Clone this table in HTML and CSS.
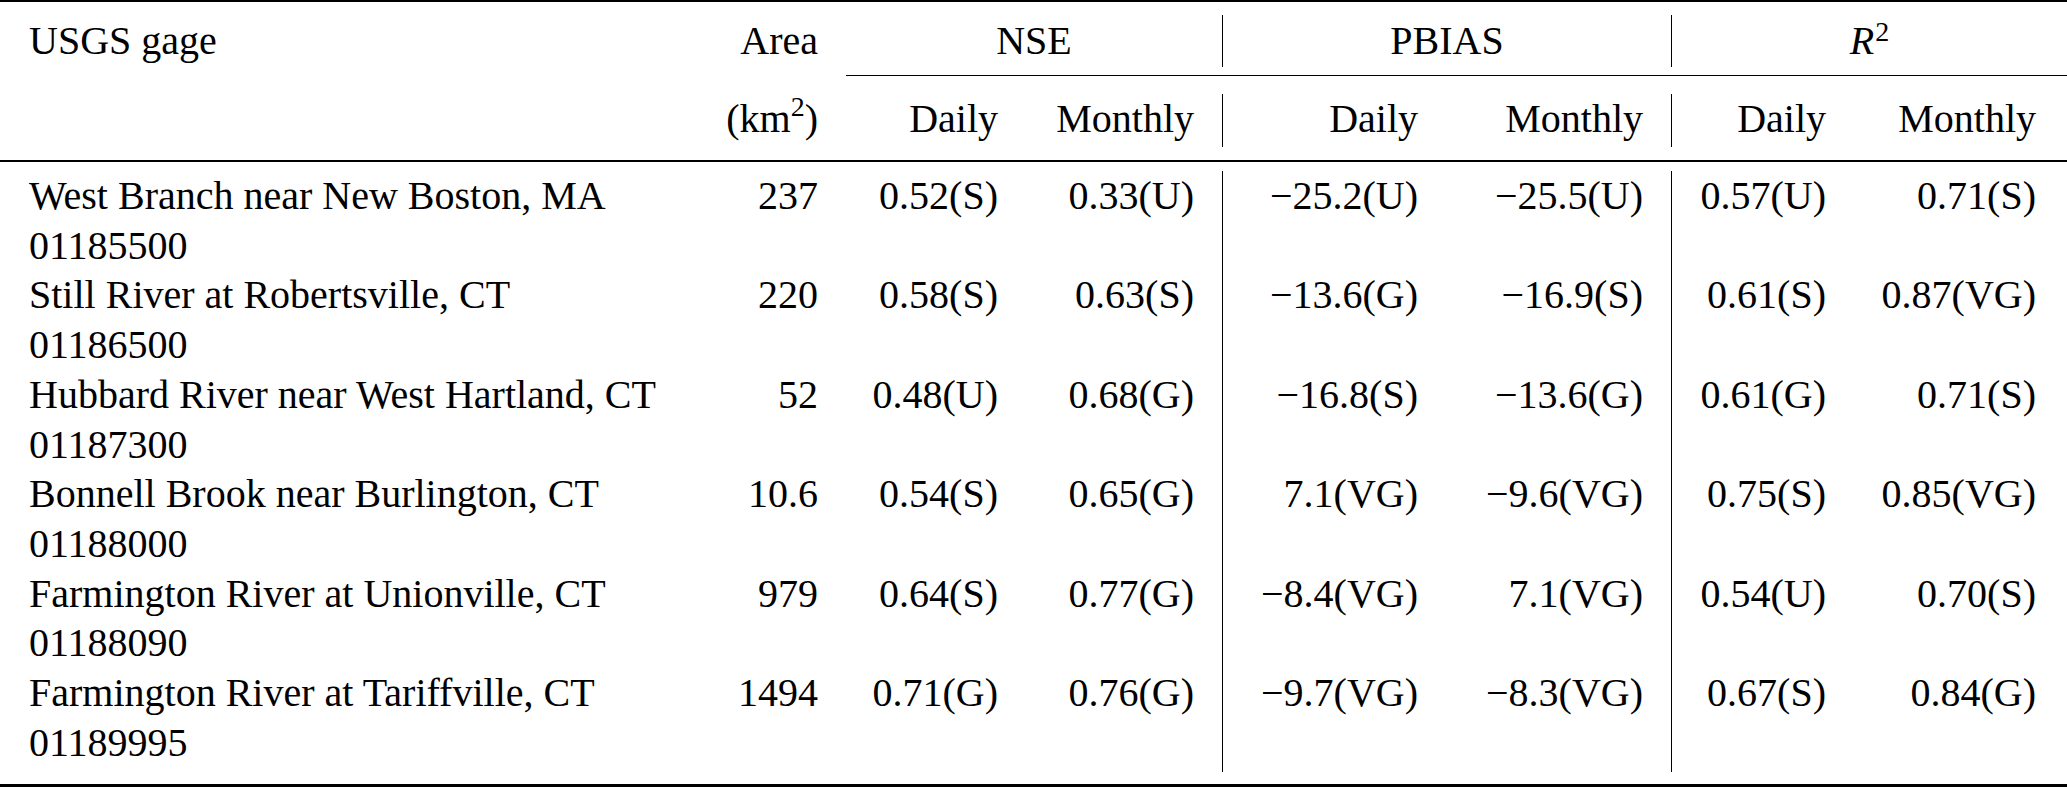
FILE: index.html
```html
<!DOCTYPE html>
<html lang="en">
<head>
<meta charset="utf-8">
<title>USGS gage performance</title>
<link rel="stylesheet" href="styles.css">
</head>
<body>
<table class="tbl">
  <colgroup>
    <col class="c-name"><col class="c-area"><col class="c-a"><col class="c-b"><col class="c-c"><col class="c-d"><col class="c-e"><col class="c-f">
  </colgroup>
  <thead>
    <tr class="rule-top"><td colspan="8"></td></tr>
    <tr class="g13"><td colspan="8"></td></tr>
    <tr class="h1">
      <th class="name">USGS gage</th>
      <th class="num">Area</th>
      <th class="grp" colspan="2">NSE</th>
      <th class="grp sep" colspan="2">PBIAS</th>
      <th class="grp sep" colspan="2"><span class="it">R</span><sup class="sup sup-r">2</sup></th>
    </tr>
    <tr class="g8"><td colspan="8"></td></tr>
    <tr class="cmid-row"><td colspan="2"></td><td colspan="6" class="cmid"></td></tr>
    <tr class="g18"><td colspan="8"></td></tr>
    <tr class="h2">
      <th class="name"></th>
      <th class="num">(km<sup class="sup">2</sup>)</th>
      <th class="num">Daily</th>
      <th class="num">Monthly</th>
      <th class="num sep">Daily</th>
      <th class="num">Monthly</th>
      <th class="num sep">Daily</th>
      <th class="num last">Monthly</th>
    </tr>
    <tr class="g13"><td colspan="8"></td></tr>
    <tr class="rule-mid"><td colspan="8"></td></tr>
    <tr class="g9"><td colspan="8"></td></tr>
  </thead>
  <tbody>
    <tr class="row">
      <td class="name">West Branch near New Boston, MA<br>01185500</td>
      <td class="num">237</td>
      <td class="num">0.52(S)</td>
      <td class="num">0.33(U)</td>
      <td class="num sep">−25.2(U)</td>
      <td class="num">−25.5(U)</td>
      <td class="num sep">0.57(U)</td>
      <td class="num last">0.71(S)</td>
    </tr>
    <tr class="row">
      <td class="name">Still River at Robertsville, CT<br>01186500</td>
      <td class="num">220</td>
      <td class="num">0.58(S)</td>
      <td class="num">0.63(S)</td>
      <td class="num sep">−13.6(G)</td>
      <td class="num">−16.9(S)</td>
      <td class="num sep">0.61(S)</td>
      <td class="num last">0.87(VG)</td>
    </tr>
    <tr class="row">
      <td class="name">Hubbard River near West Hartland, CT<br>01187300</td>
      <td class="num">52</td>
      <td class="num">0.48(U)</td>
      <td class="num">0.68(G)</td>
      <td class="num sep">−16.8(S)</td>
      <td class="num">−13.6(G)</td>
      <td class="num sep">0.61(G)</td>
      <td class="num last">0.71(S)</td>
    </tr>
    <tr class="row">
      <td class="name">Bonnell Brook near Burlington, CT<br>01188000</td>
      <td class="num">10.6</td>
      <td class="num">0.54(S)</td>
      <td class="num">0.65(G)</td>
      <td class="num sep">7.1(VG)</td>
      <td class="num">−9.6(VG)</td>
      <td class="num sep">0.75(S)</td>
      <td class="num last">0.85(VG)</td>
    </tr>
    <tr class="row">
      <td class="name">Farmington River at Unionville, CT<br>01188090</td>
      <td class="num">979</td>
      <td class="num">0.64(S)</td>
      <td class="num">0.77(G)</td>
      <td class="num sep">−8.4(VG)</td>
      <td class="num">7.1(VG)</td>
      <td class="num sep">0.54(U)</td>
      <td class="num last">0.70(S)</td>
    </tr>
    <tr class="row end">
      <td class="name">Farmington River at Tariffville, CT<br>01189995</td>
      <td class="num">1494</td>
      <td class="num">0.71(G)</td>
      <td class="num">0.76(G)</td>
      <td class="num sep">−9.7(VG)</td>
      <td class="num">−8.3(VG)</td>
      <td class="num sep">0.67(S)</td>
      <td class="num last">0.84(G)</td>
    </tr>
    <tr class="g12"><td colspan="8"></td></tr>
    <tr class="rule-bot"><td colspan="8"></td></tr>
  </tbody>
</table>
</body>
</html>
```

FILE: styles.css
```css
html, body {
  margin: 0;
  padding: 0;
  background: #fff;
}

body {
  width: 2067px;
  height: 787px;
  overflow: hidden;
  font-family: "Liberation Serif", "Times New Roman", serif;
  color: #000;
}

.tbl {
  width: 2067px;
  border-collapse: separate;
  border-spacing: 0;
  table-layout: fixed;
  font-size: 40px;
  line-height: 49.7px;
}

.c-name { width: 696px; }
.c-area { width: 150px; }
.c-a { width: 180px; }
.c-b { width: 196px; }
.c-c { width: 224px; }
.c-d { width: 225px; }
.c-e { width: 183px; }
.c-f { width: 213px; }

.tbl th,
.tbl td {
  padding: 0;
  font-weight: normal;
  vertical-align: top;
  white-space: nowrap;
}

.name {
  text-align: left;
  padding-left: 29px !important;
}

.num {
  text-align: right;
  padding-right: 28px !important;
}

.num.last {
  padding-right: 31px !important;
}

.grp {
  text-align: center;
}

.sep {
  border-left: 1px solid #000;
}

.it {
  font-style: italic;
}

.sup {
  font-size: 28px;
  line-height: 0;
  vertical-align: 16px;
}

.sup-r {
  vertical-align: 13px;
  margin-left: 1px;
}

.h1 { height: 52px; }
.h1 th { padding-top: 1px; }
.h2 { height: 53px; }

.g8 { height: 8px; }
.g9 { height: 9px; }
.g12 { height: 12px; }
.g13 { height: 13px; }
.g18 { height: 18px; }

.rule-top td { border-top: 2px solid #000; }
.rule-mid td { border-top: 2px solid #000; }
.rule-bot td { border-top: 3px solid #000; }
.cmid { border-top: 1px solid #000; }

.row.end td { padding-bottom: 5px; }
```
